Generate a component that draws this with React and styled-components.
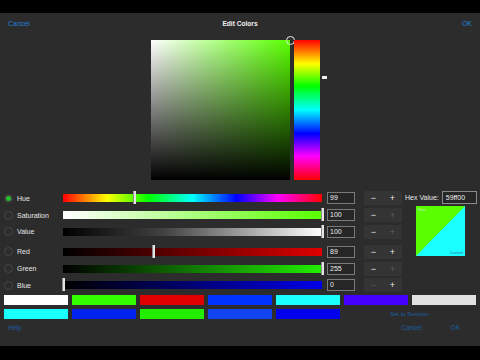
import React from "react";
import styled, { createGlobalStyle } from "styled-components";

const Global = createGlobalStyle`
  html, body { margin: 0; padding: 0; background: #000; }
  body { font-family: "Liberation Sans", Arial, sans-serif; }
`;

const Screen = styled.div`
  width: 480px;
  height: 360px;
  display: flex;
  flex-direction: column;
  background: #000;
  overflow: hidden;
`;

const Bar = styled.div`
  height: ${(p) => p.h}px;
  flex: none;
  background: #000;
`;

const Panel = styled.div`
  height: 333px;
  flex: none;
  background: #2c2c2c;
  display: flex;
  flex-direction: column;
`;

const Header = styled.div`
  height: 20px;
  display: grid;
  grid-template-columns: 1fr auto 1fr;
  align-items: center;
  padding: 0 8px 0 8px;
  font-size: 7px;
`;

const Link = styled.span`
  color: #1f7fd6;
  justify-self: ${(p) => p.$align || "start"};
  font-size: 7px;
`;

const Title = styled.span`
  color: #f2f2f2;
  font-weight: 700;
  font-size: 6.6px;
`;

const PickerArea = styled.div`
  margin-top: 7px;
  padding-left: 151px;
  display: flex;
  gap: 4px;
  height: 140px;
`;

const SVSquare = styled.div`
  position: relative;
  width: 139px;
  height: 140px;
  background: linear-gradient(to top, #000, rgba(0, 0, 0, 0)),
    linear-gradient(to right, #fff, #59ff00);
`;

const SVCursor = styled.div`
  position: absolute;
  right: -5px;
  top: -4px;
  width: 7px;
  height: 7px;
  border: 1px solid #e8e8e8;
  border-radius: 50%;
`;

const HueStrip = styled.div`
  position: relative;
  width: 26px;
  height: 140px;
  background: linear-gradient(
    to bottom,
    #ff0000 0%,
    #ffff00 17%,
    #00ff00 33%,
    #00ffff 50%,
    #0000ff 67%,
    #ff00ff 83%,
    #ff0000 100%
  );
`;

const HueMarker = styled.div`
  position: absolute;
  left: 28px;
  top: 36px;
  width: 5px;
  height: 3px;
  background: #f0f0f0;
`;

const Controls = styled.div`
  margin-top: 10px;
  display: flex;
  padding-left: 4px;
`;

const Rows = styled.div`
  display: flex;
  flex-direction: column;
  gap: 3px;
`;

const Group = styled.div`
  display: flex;
  flex-direction: column;
`;

const Row = styled.div`
  height: 16.8px;
  display: grid;
  grid-template-columns: 59px 259px 28px 38px;
  align-items: center;
`;

const LabelCell = styled.div`
  display: flex;
  align-items: center;
  gap: 4px;
`;

const Radio = styled.div`
  width: 9px;
  height: 9px;
  border-radius: 50%;
  border: 1px solid ${(p) => (p.$on ? "#3c3c3c" : "#474747")};
  background: ${(p) => (p.$on ? "#404040" : "transparent")};
  display: flex;
  align-items: center;
  justify-content: center;
  box-sizing: border-box;
  &::after {
    content: "";
    display: ${(p) => (p.$on ? "block" : "none")};
    width: 5px;
    height: 5px;
    border-radius: 50%;
    background: #22c02a;
  }
`;

const Label = styled.span`
  color: #e6e6e6;
  font-size: 7px;
`;

const Slider = styled.div`
  position: relative;
  height: 8px;
  background: ${(p) => p.$bg};
`;

const Thumb = styled.div`
  position: absolute;
  top: -3px;
  width: 3px;
  height: 13px;
  margin-left: -1px;
  background: #e4e4e4;
  border-left: 1px solid #8a8a8a;
  box-sizing: border-box;
`;

const NumBox = styled.div`
  margin-left: 5px;
  width: 28px;
  height: 12px;
  box-sizing: border-box;
  border: 1px solid #7a7a7a;
  background: #262626;
  color: #ededed;
  font-size: 7px;
  line-height: 10px;
  padding-left: 2px;
`;

const Stepper = styled.div`
  margin-left: 14px;
  width: 38px;
  height: 14px;
  background: #343434;
  display: grid;
  grid-template-columns: 1fr 1fr;
  align-items: center;
  justify-items: center;
`;

const Step = styled.span`
  color: ${(p) => (p.$dim ? "#5e5e5e" : "#e6e6e6")};
  font-size: 9px;
  line-height: 14px;
`;

const Side = styled.div`
  margin-left: 17px;
  display: flex;
  flex-direction: column;
`;

const HexRow = styled.div`
  display: flex;
  align-items: center;
  gap: 3px;
  height: 14px;
`;

const HexLabel = styled.span`
  color: #e6e6e6;
  font-size: 7px;
`;

const HexBox = styled.div`
  width: 35px;
  height: 13px;
  box-sizing: border-box;
  border: 1px solid #8a8a8a;
  background: #262626;
  color: #ededed;
  font-size: 7px;
  line-height: 11px;
  padding-left: 3px;
`;

const Preview = styled.div`
  position: relative;
  margin: 2px 0 0 11px;
  width: 49px;
  height: 50px;
  background: linear-gradient(to bottom right, #59ff00 49.6%, #1affff 50.4%);
`;

const Tiny = styled.span`
  position: absolute;
  font-size: 4px;
  ${(p) => (p.$top ? "top: 1px; left: 2px; color: #c8e8c0;" : "bottom: 1px; right: 2px; color: #2a6a9a;")}
`;

const Swatches = styled.div`
  margin-top: 1px;
  padding-left: 4px;
  display: grid;
  grid-template-columns: repeat(7, 64px);
  column-gap: 4px;
  row-gap: 4px;
`;

const Swatch = styled.div`
  height: 10px;
  background: ${(p) => p.$c};
`;

const SessionLink = styled.span`
  grid-column: 6 / span 2;
  justify-self: start;
  align-self: center;
  margin-left: 46px;
  color: #1a5fa0;
  font-size: 6px;
`;

const Footer = styled.div`
  margin-top: 4px;
  display: flex;
  align-items: center;
  padding: 0 8px;
  height: 10px;
`;

const FootLink = styled.span`
  color: #1a5fa0;
  font-size: 6.5px;
  margin-left: ${(p) => p.$ml || 0}px;
`;

const Spacer = styled.div`
  flex: 1;
`;

const hueGrad =
  "linear-gradient(to right, #ff0000 0%, #ffff00 17%, #00ff00 33%, #00ffff 50%, #0000ff 67%, #ff00ff 83%, #ff0000 100%)";

const groups = [
  [
    { name: "Hue", on: true, bg: hueGrad, val: "99", pos: 99 / 360, dimM: false, dimP: false },
    { name: "Saturation", bg: "linear-gradient(to right, #ffffff, #59ff00)", val: "100", pos: 1, dimM: false, dimP: true },
    { name: "Value", bg: "linear-gradient(to right, #000000, #444 40%, #ffffff)", val: "100", pos: 1, dimM: false, dimP: true },
  ],
  [
    { name: "Red", bg: "linear-gradient(to right, #000000, #e00000)", val: "89", pos: 89 / 255, dimM: false, dimP: false },
    { name: "Green", bg: "linear-gradient(to right, #000000, #22ee00)", val: "255", pos: 1, dimM: false, dimP: true },
    { name: "Blue", bg: "linear-gradient(to right, #000000, #0000e8)", val: "0", pos: 0, dimM: true, dimP: false },
  ],
];

const row1 = ["#ffffff", "#33ff00", "#e00000", "#0033ff", "#1affff", "#4400ff", "#e2e2e2"];
const row2 = ["#1affff", "#0022ee", "#22ee00", "#1144ee", "#0000ee"];

export default function App() {
  return (
    <Screen>
      <Global />
      <Bar h={13} />
      <Panel>
        <Header>
          <Link>Cancel</Link>
          <Title>Edit Colors</Title>
          <Link $align="end">OK</Link>
        </Header>
        <PickerArea>
          <SVSquare>
            <SVCursor />
          </SVSquare>
          <HueStrip>
            <HueMarker />
          </HueStrip>
        </PickerArea>
        <Controls>
          <Rows>
            {groups.map((g, gi) => (
              <Group key={gi}>
                {g.map((r) => (
                  <Row key={r.name}>
                    <LabelCell>
                      <Radio $on={r.on} />
                      <Label>{r.name}</Label>
                    </LabelCell>
                    <Slider $bg={r.bg}>
                      <Thumb style={{ left: `${r.pos * 100}%` }} />
                    </Slider>
                    <NumBox>{r.val}</NumBox>
                    <Stepper>
                      <Step $dim={r.dimM}>−</Step>
                      <Step $dim={r.dimP}>+</Step>
                    </Stepper>
                  </Row>
                ))}
              </Group>
            ))}
          </Rows>
          <Side>
            <HexRow>
              <HexLabel>Hex Value:</HexLabel>
              <HexBox>59ff00</HexBox>
            </HexRow>
            <Preview>
              <Tiny $top>New</Tiny>
              <Tiny>Current</Tiny>
            </Preview>
          </Side>
        </Controls>
        <Swatches>
          {row1.map((c, i) => (
            <Swatch key={"a" + i} $c={c} />
          ))}
          {row2.map((c, i) => (
            <Swatch key={"b" + i} $c={c} />
          ))}
          <SessionLink>Set to Session</SessionLink>
        </Swatches>
        <Footer>
          <FootLink>Help</FootLink>
          <Spacer />
          <FootLink>Cancel</FootLink>
          <FootLink $ml={29}>OK</FootLink>
          <FootLink $ml={12} />
        </Footer>
      </Panel>
      <Bar h={14} />
    </Screen>
  );
}
